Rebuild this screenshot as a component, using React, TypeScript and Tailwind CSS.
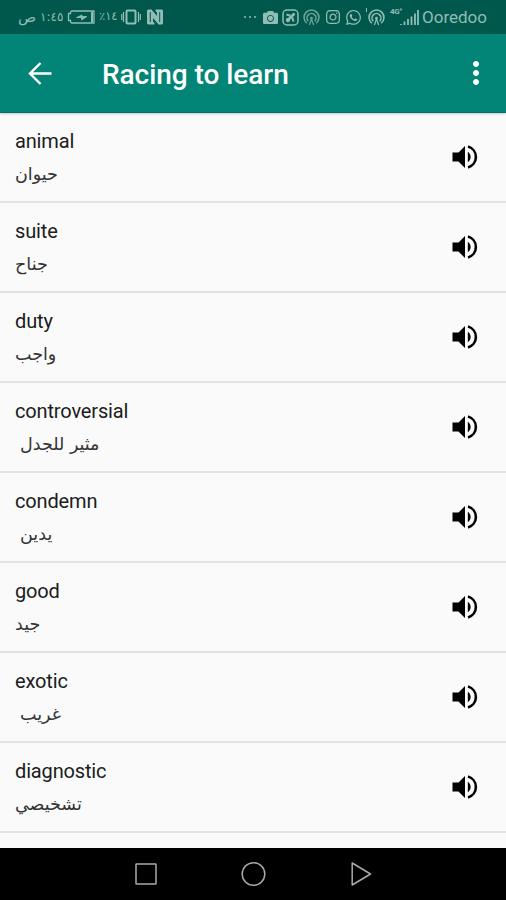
import type { ReactNode } from "react";
import { FaCamera, FaInstagram, FaWhatsapp } from "react-icons/fa";
import { MdMoreVert } from "react-icons/md";

type Word = {
	en: string;
	ar: string;
	indent?: boolean;
};

const words: Word[] = [
	{ en: "animal", ar: "حيوان" },
	{ en: "suite", ar: "جناح" },
	{ en: "duty", ar: "واجب" },
	{ en: "controversial", ar: "مثير للجدل", indent: true },
	{ en: "condemn", ar: "يدين", indent: true },
	{ en: "good", ar: "جيد" },
	{ en: "exotic", ar: "غريب", indent: true },
	{ en: "diagnostic", ar: "تشخيصي" },
];

function Glyph({ className, box, children }: { className: string; box: string; children: ReactNode }) {
	return (
		<svg className={`shrink-0 ${className}`} viewBox={box} fill="none" stroke="currentColor" strokeWidth="1.5">
			{children}
		</svg>
	);
}

function Hotspot() {
	return (
		<>
			<path d="M3.600 13.400a7 7 0 1 1 8.800 0" />
			<path d="M5 11.400a4.200 4.200 0 1 1 6 0" />
			<circle cx="8" cy="8.600" r="1.300" fill="currentColor" stroke="none" />
			<path d="M8 9.500L6 15M8 9.500l2 5.500" strokeWidth="1.2" />
		</>
	);
}

function StatusBar() {
	return (
		<div className="flex h-[34px] shrink-0 items-center bg-[#00574b] pl-[18px] pr-[19px] text-[#91bdb5]">
			<span className="w-[22px] font-['DejaVu_Sans',sans-serif] text-[15px] leading-none">ص</span>
			<span className="w-[27px] font-['DejaVu_Sans',sans-serif] text-[12px] leading-none">١:٤٥</span>
			<Glyph className="h-[14px] w-[29px]" box="0 0 29 14">
				<path d="M5 1h22v12H5q-1.500 0-1.500-2.500H1.500v-7h2Q3.500 1 5 1z" strokeWidth="1.3" />
				<path d="M9.500 7.500l5.500-2.500v1.500h5l-5.500 3.500v-2.500z" fill="currentColor" strokeWidth="0.8" />
				<path d="M25 2v10" strokeWidth="2" />
			</Glyph>
			<span
				className="ml-[3px] w-[22px] whitespace-nowrap font-['DejaVu_Sans',sans-serif] text-[11.5px] leading-none"
				dir="ltr"
			>
				٪١٤
			</span>
			<Glyph className="h-[16px] w-[20px]" box="0 0 20 16">
				<rect x="5.500" y="1.500" width="9" height="13" rx="1" strokeWidth="2" />
				<path d="M2.500 3v10M17.500 3v10M.7 5v6M19.300 5v6" strokeWidth="1.2" />
			</Glyph>
			<Glyph className="ml-[6px] h-[16px] w-[16px]" box="0 0 16 16">
				<path d="M0 1.500L1 .5h3.500L10 7V3.500L8.500 2V.5H15l1 1v13l-1 1h-3.500L6 9v3.500L7.500 14v1.500H1l-1-1z" fill="currentColor" stroke="none" />
				<path d="M3.300 3v10M12.700 3v10" stroke="#00574b" strokeWidth="1" />
			</Glyph>

			<div className="ml-auto flex items-center">
				<span className="mr-[7px] flex gap-[3px]">
					<i className="size-[2px] rounded-full bg-current" />
					<i className="size-[2px] rounded-full bg-current" />
					<i className="size-[2px] rounded-full bg-current" />
				</span>
				<FaCamera className="mr-[4px] size-[15px]" />
				<Glyph className="mr-[4px] size-[17px]" box="0 0 17 17">
					<rect x="1" y="1" width="15" height="15" rx="4" />
					<path d="M4.500 12.500l8-8" strokeWidth="2.500" />
					<path d="M4.500 5.500l4 1.200M11.500 12.500L10.300 8.500M4.500 9.500l3 3" strokeWidth="2" />
				</Glyph>
				<Glyph className="mr-[5px] size-[17px] opacity-75" box="0 0 16 16">
					<Hotspot />
				</Glyph>
				<FaInstagram className="mr-[4px] size-[16px]" />
				<FaWhatsapp className="mr-[4px] size-[17px]" />
				<span className="mr-px h-[4px] w-px self-start bg-current" />
				<Glyph className="mr-[5px] size-[17px]" box="0 0 16 16">
					<Hotspot />
				</Glyph>
				<span className="-mr-[5px] -mt-[10px] w-[14px] whitespace-nowrap font-[Roboto,sans-serif] text-[8px] font-bold leading-none tracking-tighter">
					4G⁺
				</span>
				<Glyph className="mr-[3px] h-[15px] w-[20px]" box="2 0 20 15">
					<path d="M4 15v-1M7.500 15v-3.500M11 15V9M14.500 15V6.500M18 15V3.500M21 15V0" strokeWidth="1.8" />
				</Glyph>
				<span className="pt-px font-[Roboto,sans-serif] text-[17px] leading-none">Ooredoo</span>
			</div>
		</div>
	);
}

function Speaker() {
	return (
		<svg className="h-[26px] w-[27px] shrink-0 text-black" viewBox="0 0 27 26" fill="currentColor">
			<path d="M.500 8.500H6.500l6.500-6.500v22l-6.500-6.500H.500z" />
			<path d="M15.800 7.800a6.200 6.200 0 0 1 0 10.400z" />
			<path d="M16 2.600a10.800 10.800 0 0 1 0 20.800" fill="none" stroke="currentColor" strokeWidth="2.600" />
		</svg>
	);
}

function NavBar() {
	return (
		<div className="flex h-[52px] shrink-0 items-center bg-black pl-[134px] text-[#a9a9a9]">
			<Glyph className="size-[24px]" box="0 0 24 24">
				<rect x="2" y="2" width="20" height="20" rx="0.500" />
			</Glyph>
			<Glyph className="ml-[82px] size-[26px]" box="0 0 26 26">
				<circle cx="13.500" cy="13" r="11.300" />
			</Glyph>
			<Glyph className="ml-[83px] size-[26px]" box="0 0 26 26">
				<path d="M3.200 2v22L21.500 13z" strokeLinejoin="round" />
			</Glyph>
		</div>
	);
}

export default function App() {
	return (
		<div className="flex h-[900px] w-[506px] flex-col overflow-hidden bg-[#fafafa]">
			<StatusBar />
			<header className="relative flex h-[79px] shrink-0 items-center border-b border-[#067064] bg-[#028576] pl-[27px] pr-[12px] text-white shadow-[0_1px_2px_rgba(0,0,0,0.2)]">
				<Glyph className="h-[26px] w-[26px]" box="0 0 26 26">
					<path d="M24.500 13.500H3.500M13.500 3L3 13.500l10.500 10.500" strokeWidth="2.400" />
				</Glyph>
				<h1 className="ml-[49px] pt-[4px] font-[Roboto,sans-serif] text-[28px] font-medium leading-none tracking-[-0.05px]">
					Racing to learn
				</h1>
				<MdMoreVert className="ml-auto size-[36px]" />
			</header>

			<ul className="min-h-0 flex-1">
				{words.map((w) => (
					<li
						key={w.en}
						className="flex h-[90px] items-center justify-between border-b-2 border-[#e3e3e3] pl-[15px] pr-[27px]"
					>
						<div className="flex flex-col items-start">
							<span className="font-[Roboto,sans-serif] text-[20px] leading-[28px] tracking-[-0.15px] text-[#1c1c1c]">
								{w.en}
							</span>
							<span
								className={`mt-[5px] font-['DejaVu_Sans',sans-serif] text-[17.5px] leading-[28px] text-[#333] ${w.indent ? "pl-[5px]" : ""}`}
							>
								{w.ar}
							</span>
						</div>
						<Speaker />
					</li>
				))}
			</ul>
			<NavBar />
		</div>
	);
}
